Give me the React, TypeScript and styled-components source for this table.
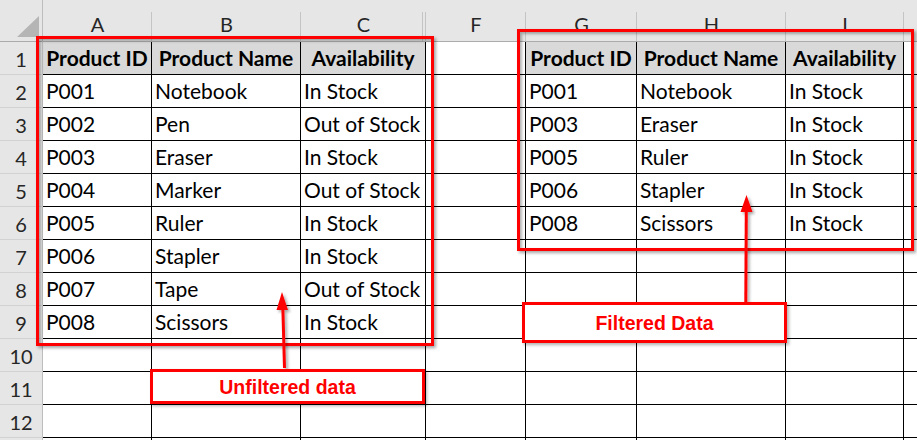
import React from "react";
import styled, { createGlobalStyle } from "styled-components";

const GlobalStyle = createGlobalStyle`
  html, body { margin: 0; padding: 0; background: #ffffff; }
  body { width: 917px; height: 440px; overflow: hidden; }
  #root { width: 917px; height: 440px; }
`;

type Col = { key: string; w: number; gap?: boolean };

const COLS: Col[] = [
  { key: "A", w: 109 },
  { key: "B", w: 149 },
  { key: "C", w: 125, gap: true },
  { key: "F", w: 100 },
  { key: "G", w: 111 },
  { key: "H", w: 149 },
  { key: "I", w: 118 },
  { key: "J", w: 60 },
];

const HEAD = ["Product ID", "Product Name", "Availability"];

const LEFT: string[][] = [
  ["P001", "Notebook", "In Stock"],
  ["P002", "Pen", "Out of Stock"],
  ["P003", "Eraser", "In Stock"],
  ["P004", "Marker", "Out of Stock"],
  ["P005", "Ruler", "In Stock"],
  ["P006", "Stapler", "In Stock"],
  ["P007", "Tape", "Out of Stock"],
  ["P008", "Scissors", "In Stock"],
];

const RIGHT: string[][] = [
  ["P001", "Notebook", "In Stock"],
  ["P003", "Eraser", "In Stock"],
  ["P005", "Ruler", "In Stock"],
  ["P006", "Stapler", "In Stock"],
  ["P008", "Scissors", "In Stock"],
];

const ROW_COUNT = 13;
const LABELLED_ROWS = 12;

const Page = styled.div`
  position: relative;
  width: 917px;
  height: 440px;
  overflow: hidden;
  background: #ffffff;
`;

const Sheet = styled.div`
  display: grid;
  grid-template-columns: 43px ${COLS.map((c) => `${c.w}px`).join(" ")};
  grid-template-rows: 42px;
  grid-auto-rows: 33px;
  font-family: Lato, "Open Sans", sans-serif;
`;

const Corner = styled.div`
  position: relative;
  background: #e6e6e6;
  border-right: 1px solid #bdbdbd;
  border-bottom: 1px solid #ababab;
  &::after {
    content: "";
    position: absolute;
    right: 3px;
    bottom: 4px;
    width: 22px;
    height: 21px;
    background: #b5b5b5;
    clip-path: polygon(100% 0, 100% 100%, 0 100%);
  }
`;

const ColHead = styled.div<{ $gap?: boolean }>`
  position: relative;
  background: #e6e6e6;
  border-bottom: 1px solid #ababab;
  display: flex;
  align-items: flex-end;
  justify-content: center;
  padding-bottom: 5px;
  font-size: 20px;
  color: #262626;
  &::after {
    content: "";
    position: absolute;
    right: 0;
    top: 12px;
    bottom: 0;
    width: 1px;
    background: #c4c4c4;
  }
  &::before {
    content: "";
    display: ${(p) => (p.$gap ? "block" : "none")};
    position: absolute;
    right: 3px;
    top: 12px;
    bottom: 0;
    width: 1px;
    background: #c4c4c4;
  }
`;

const RowHead = styled.div`
  background: #e6e6e6;
  border-right: 1px solid #bdbdbd;
  border-bottom: 1px solid #d2d2d2;
  display: flex;
  align-items: center;
  justify-content: center;
  padding-top: 1px;
  font-size: 20px;
  color: #262626;
`;

const Cell = styled.div<{ $head?: boolean }>`
  box-sizing: border-box;
  border-right: 1px solid #000000;
  border-bottom: 1px solid #000000;
  background: ${(p) => (p.$head ? "#d9d9d9" : "#ffffff")};
  display: flex;
  align-items: center;
  justify-content: ${(p) => (p.$head ? "center" : "flex-start")};
  padding: 0 0 1px ${(p) => (p.$head ? "0" : "3px")};
  font-size: 21px;
  font-weight: ${(p) => (p.$head ? 700 : 400)};
  color: #000000;
  white-space: nowrap;
  overflow: hidden;
`;

const Frame = styled.div<{ $x: number; $y: number; $w: number; $h: number }>`
  position: absolute;
  left: ${(p) => p.$x}px;
  top: ${(p) => p.$y}px;
  width: ${(p) => p.$w}px;
  height: ${(p) => p.$h}px;
  box-sizing: border-box;
  border: 3px solid #ff0000;
  box-shadow: 2px 2px 3px rgba(0, 0, 0, 0.35), inset 2px 2px 3px rgba(0, 0, 0, 0.3);
  pointer-events: none;
`;

const Label = styled.div<{ $x: number; $y: number; $w: number; $h: number }>`
  position: absolute;
  left: ${(p) => p.$x}px;
  top: ${(p) => p.$y}px;
  width: ${(p) => p.$w}px;
  height: ${(p) => p.$h}px;
  box-sizing: border-box;
  border: 3px solid #ff0000;
  background: #ffffff;
  box-shadow: 2px 2px 3px rgba(0, 0, 0, 0.3);
  display: flex;
  align-items: center;
  justify-content: center;
  padding-top: 1px;
  font-family: "Liberation Sans", Arial, sans-serif;
  font-weight: 700;
  font-size: 19.5px;
  color: #ff0000;
`;

const Arrows = styled.svg`
  position: absolute;
  left: 0;
  top: 0;
  width: 917px;
  height: 440px;
  pointer-events: none;
`;

function cellText(col: string, row: number): { text: string; head: boolean } {
  const li = ["A", "B", "C"].indexOf(col);
  const ri = ["G", "H", "I"].indexOf(col);
  if (li >= 0) {
    if (row === 1) return { text: HEAD[li], head: true };
    const r = LEFT[row - 2];
    return { text: r ? r[li] : "", head: false };
  }
  if (ri >= 0) {
    if (row === 1) return { text: HEAD[ri], head: true };
    const r = RIGHT[row - 2];
    return { text: r ? r[ri] : "", head: false };
  }
  return { text: "", head: false };
}

export default function App() {
  const rows = Array.from({ length: ROW_COUNT }, (_, i) => i + 1);
  return (
    <>
      <GlobalStyle />
      <Page>
        <Sheet>
          <Corner />
          {COLS.map((c) => (
            <ColHead key={c.key} $gap={c.gap}>
              {c.key === "J" ? "" : c.key}
            </ColHead>
          ))}
          {rows.map((r) => (
            <React.Fragment key={r}>
              <RowHead>{r <= LABELLED_ROWS ? r : ""}</RowHead>
              {COLS.map((c) => {
                const { text, head } = cellText(c.key, r);
                return (
                  <Cell key={c.key} $head={head}>
                    {text}
                  </Cell>
                );
              })}
            </React.Fragment>
          ))}
        </Sheet>

        <Frame $x={36} $y={36} $w={398} $h={310} />
        <Frame $x={517} $y={29} $w={397} $h={222} />

        <Arrows viewBox="0 0 917 440">
          <defs>
            <filter id="sh" x="-50%" y="-50%" width="200%" height="200%">
              <feDropShadow dx="2" dy="2" stdDeviation="1.5" floodColor="#000" floodOpacity="0.35" />
            </filter>
          </defs>
          <g filter="url(#sh)" fill="#ff0000" stroke="#ff0000">
            <line x1="284.5" y1="368" x2="282.8" y2="306" strokeWidth="3" />
            <polygon points="282,292 276.5,310 288,310" strokeWidth="0" />
            <line x1="745.8" y1="302" x2="746.3" y2="208" strokeWidth="3" />
            <polygon points="746.5,195 740.5,212 752.5,212" strokeWidth="0" />
          </g>
        </Arrows>

        <Label $x={150} $y={369} $w={275} $h={35}>Unfiltered data</Label>
        <Label $x={522} $y={302} $w={265} $h={41}>Filtered Data</Label>
      </Page>
    </>
  );
}
